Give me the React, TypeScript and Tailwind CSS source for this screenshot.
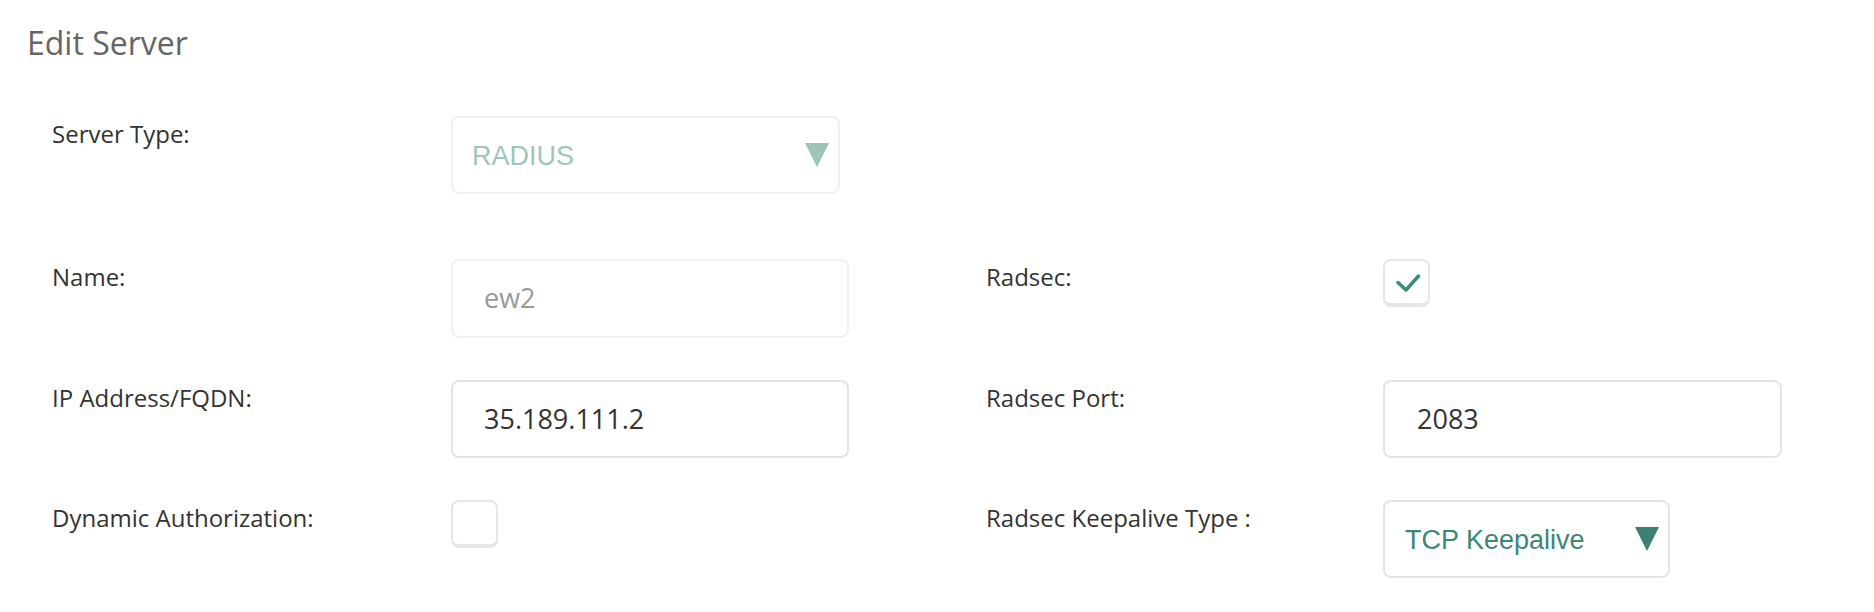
const label = "pt-[2px] text-[24px] leading-[32px] text-[#333] font-['Open_Sans',sans-serif]";

function Caret({ color }: { color: string }) {
  return (
    <svg width="24" height="24" viewBox="0 0 24 24" className="shrink-0">
      <polygon points="0,0 24,0 12,24" fill={color} />
    </svg>
  );
}

function Checkbox({ checked }: { checked?: boolean }) {
  return (
    <div className="w-[47px] h-[48px] rounded-[8px] border-2 border-b-4 border-[#e6e6e6] bg-white flex items-center justify-center">
      {checked && (
        <svg width="24" height="20" viewBox="0 0 24 20" overflow="visible">
          <polyline
            points="3,10.5 11,18 23.5,4"
            fill="none"
            stroke="#3a8a78"
            strokeWidth="3.5"
            strokeLinecap="round"
            strokeLinejoin="round"
          />
        </svg>
      )}
    </div>
  );
}

export default function App() {
  return (
    <div className="w-full h-[612px] overflow-hidden bg-white px-[27px] pt-[23px] font-['Open_Sans',sans-serif]">
      {/* Title */}
      <h1 className="text-[32px] leading-[40px] text-[#666669]">Edit Server</h1>

      <div className="pl-[25px] mt-[53px]">
        {/* Server type */}
        <div className="flex">
          <div className={`w-[399px] ${label}`}>Server Type:</div>
          <div className="w-[389px] h-[78px] rounded-[8px] border-2 border-[#f0f0f0] flex items-center justify-between pl-[19px] pr-[9px] font-['Liberation_Sans',Arial,sans-serif] text-[27px] text-[#9fc5bb]">
            <span className="pt-[2px]">RADIUS</span>
            <Caret color="#9cc4b9" />
          </div>
        </div>

        {/* Fields */}
        <div className="mt-[65px] grid grid-cols-[399px_535px_397px_399px] gap-y-[42px] items-start">
          <div className={label}>Name:</div>
          <div className="w-[398px] h-[79px] rounded-[8px] border-2 border-[#f0f0f0] flex items-center pl-[31px] text-[27px] text-[#999]">
            ew2
          </div>
          <div className={label}>Radsec:</div>
          <Checkbox checked />

          <div className={label}>IP Address/FQDN:</div>
          <div className="w-[398px] h-[78px] rounded-[8px] border-2 border-[#e4e4e4] flex items-center pl-[31px] text-[27px] text-[#333]">
            35.189.111.2
          </div>
          <div className={label}>Radsec Port:</div>
          <div className="w-[399px] h-[78px] rounded-[8px] border-2 border-[#e4e4e4] flex items-center pl-[32px] text-[27px] text-[#333]">
            2083
          </div>

          <div className={label}>Dynamic Authorization:</div>
          <Checkbox />
          <div className={label}>Radsec Keepalive Type :</div>
          <div className="w-[287px] h-[78px] rounded-[8px] border-2 border-[#e4e4e4] flex items-center justify-between pl-[20px] pr-[9px] font-['Liberation_Sans',Arial,sans-serif] text-[27px] text-[#3e8676]">
            <span className="pt-[2px]">TCP Keepalive</span>
            <Caret color="#3b8070" />
          </div>
        </div>
      </div>
    </div>
  );
}
